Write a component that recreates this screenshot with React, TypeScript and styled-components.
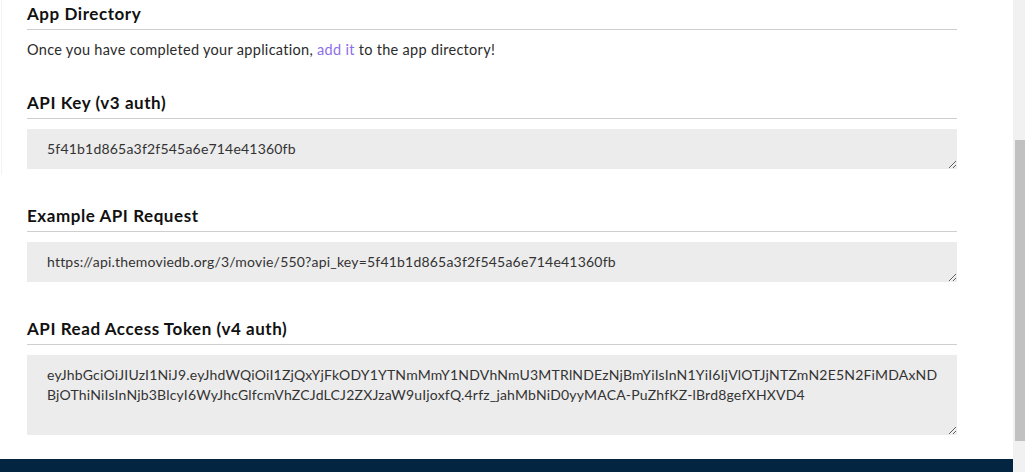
import styled, {createGlobalStyle} from "styled-components";

const GlobalStyle = createGlobalStyle`
    html, body {
        margin: 0;
        padding: 0;
        background: #fff;
        overflow: hidden;
    }

    body {
        font-family: Lato, "Open Sans", sans-serif;
        color: #212529;
    }
`

const StyledPage = styled.div`
    display: flex;
    flex-direction: row;
    width: 1025px;
    height: 472px;
    overflow: hidden;
`

const StyledViewport = styled.div`
    flex: 1;
    display: flex;
    flex-direction: column;
    min-width: 0;
`

const StyledBody = styled.div`
    flex: 1;
    display: flex;
    flex-direction: row;
`

const StyledEdge = styled.div`
    width: 1px;
    height: 175px;
    margin-left: 1px;
    background: #f3f3f3;
`

const StyledContent = styled.div`
    width: 930px;
    padding-left: 25px;
`

const StyledSection = styled.section<{ $gap: number }>`
    margin-top: ${p => p.$gap}px;
`

const StyledHeading = styled.h3`
    margin: 0;
    font-size: 17px;
    font-weight: 700;
    letter-spacing: 0.55px;
    line-height: 22px;
    color: #111;
    padding-bottom: 4px;
    border-bottom: 1px solid #cfcfcf;
`

const StyledText = styled.p`
    margin: 10px 0 0;
    font-size: 14.5px;
    letter-spacing: 0.3px;
    line-height: 20px;
    color: #2b2b2b;

    a {
        color: #8d6ee9;
        text-decoration: none;
    }
`

const StyledTextarea = styled.textarea<{ $rows: number }>`
    display: block;
    box-sizing: border-box;
    width: 100%;
    height: ${p => p.$rows * 20 + 20}px;
    margin: 10px 0 0;
    padding: 10px 20px;
    border: none;
    outline: none;
    background: #ececec;
    font-family: Lato, "Open Sans", sans-serif;
    font-size: 14px;
    letter-spacing: 0.2px;
    line-height: 19.5px;
    color: #333;
    resize: vertical;
    overflow: hidden;
`

const StyledFooter = styled.footer`
    height: 13px;
    background: #032541;
`

const StyledScrollbar = styled.div`
    width: 12px;
    height: 472px;
    background: #f1f1f1;
    display: flex;
    flex-direction: column;
    align-items: flex-end;
    padding-top: 140px;
    box-sizing: border-box;

    div {
        width: 10px;
        height: 301px;
        background: #c1c1c1;
    }
`

const apiKey = '5f41b1d865a3f2f545a6e714e41360fb'
const token = 'eyJhbGciOiJIUzI1NiJ9.eyJhdWQiOiI1ZjQxYjFkODY1YTNmMmY1NDVhNmU3MTRlNDEzNjBmYiIsInN1YiI6IjVlOTJjNTZmN2E5N2FiMDAxND\n' +
  'BjOThiNiIsInNjb3BlcyI6WyJhcGlfcmVhZCJdLCJ2ZXJzaW9uIjoxfQ.4rfz_jahMbNiD0yyMACA-PuZhfKZ-lBrd8gefXHXVD4'

const App = () => {
  return (
    <StyledPage>
      <GlobalStyle/>
      <StyledViewport>
        <StyledBody>
          <StyledEdge/>
          <StyledContent>
            <StyledSection $gap={3}>
              <StyledHeading>App Directory</StyledHeading>
              <StyledText>
                Once you have completed your application, <a href="#">add it</a> to the app directory!
              </StyledText>
            </StyledSection>
            <StyledSection $gap={32}>
              <StyledHeading>API Key (v3 auth)</StyledHeading>
              <StyledTextarea $rows={1} readOnly value={apiKey}/>
            </StyledSection>
            <StyledSection $gap={36}>
              <StyledHeading>Example API Request</StyledHeading>
              <StyledTextarea $rows={1} readOnly value={`https://api.themoviedb.org/3/movie/550?api_key=${apiKey}`}/>
            </StyledSection>
            <StyledSection $gap={36}>
              <StyledHeading>API Read Access Token (v4 auth)</StyledHeading>
              <StyledTextarea $rows={3} readOnly wrap="off" value={token}/>
            </StyledSection>
          </StyledContent>
        </StyledBody>
        <StyledFooter/>
      </StyledViewport>
      <StyledScrollbar>
        <div/>
      </StyledScrollbar>
    </StyledPage>
  );
};

export default App;
